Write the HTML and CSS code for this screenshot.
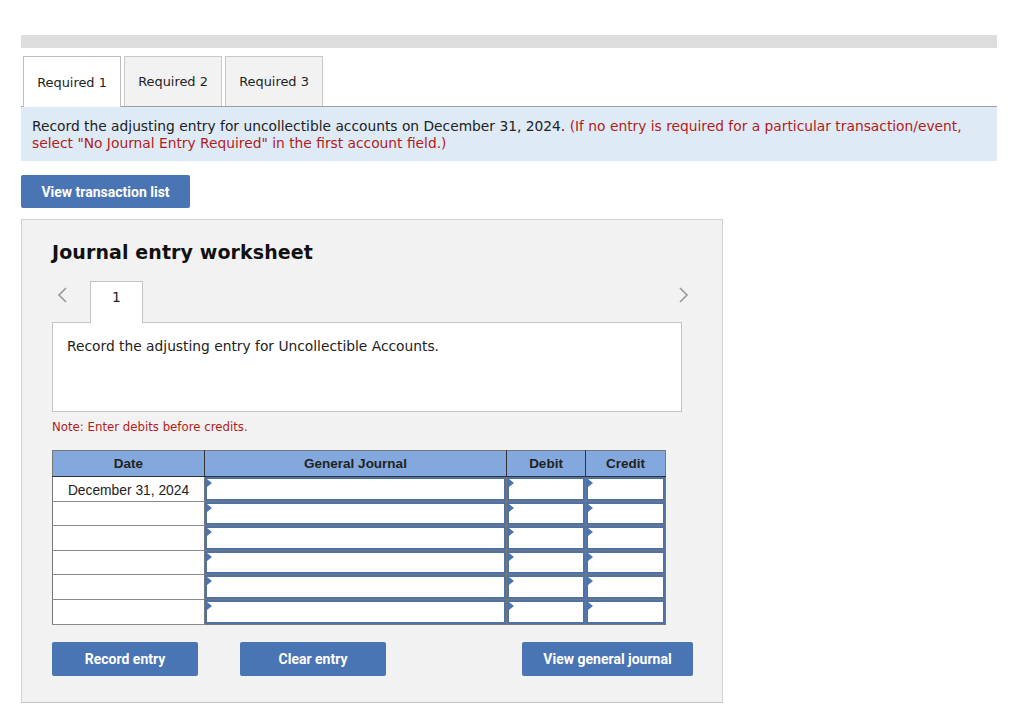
FILE: index.html
```html
<!DOCTYPE html>
<html>
<head>
<meta charset="utf-8">
<link rel="stylesheet" href="styles.css">
</head>
<body>
<div class="page">
  <div class="topbar"></div>
  <div class="tabs">
    <div class="tab active">Required 1</div>
    <div class="tab">Required 2</div>
    <div class="tab">Required 3</div>
  </div>
  <div class="instr">Record the adjusting entry for uncollectible accounts on December 31, 2024. <span class="red">(If no entry is required for a particular transaction/event, select "No Journal Entry Required" in the first account field.)</span></div>
  <button class="btn btn-list">View transaction list</button>
  <div class="panel">
    <h2 class="title">Journal entry worksheet</h2>
    <div class="nav">
      <span class="arrow left"><svg width="12" height="18" viewBox="0 0 12 18"><path d="M10 2 L3 9 L10 16" fill="none" stroke="#999" stroke-width="1.6"/></svg></span>
      <div class="numtab">1</div>
      <span class="arrow right"><svg width="12" height="18" viewBox="0 0 12 18"><path d="M2 2 L9 9 L2 16" fill="none" stroke="#999" stroke-width="1.6"/></svg></span>
    </div>
    <div class="desc">Record the adjusting entry for Uncollectible Accounts.</div>
    <div class="note">Note: Enter debits before credits.</div>
    <table class="journal">
      <colgroup><col class="c1"><col class="c2"><col class="c3"><col class="c4"></colgroup>
      <thead>
        <tr><th>Date</th><th>General Journal</th><th>Debit</th><th>Credit</th></tr>
      </thead>
      <tbody>
        <tr><td class="date">December 31, 2024</td><td class="in"><div class="box"></div></td><td class="in"><div class="box"></div></td><td class="in"><div class="box"></div></td></tr>
        <tr><td class="date"></td><td class="in"><div class="box"></div></td><td class="in"><div class="box"></div></td><td class="in"><div class="box"></div></td></tr>
        <tr><td class="date"></td><td class="in"><div class="box"></div></td><td class="in"><div class="box"></div></td><td class="in"><div class="box"></div></td></tr>
        <tr><td class="date"></td><td class="in"><div class="box"></div></td><td class="in"><div class="box"></div></td><td class="in"><div class="box"></div></td></tr>
        <tr><td class="date"></td><td class="in"><div class="box"></div></td><td class="in"><div class="box"></div></td><td class="in"><div class="box"></div></td></tr>
        <tr><td class="date"></td><td class="in"><div class="box"></div></td><td class="in"><div class="box"></div></td><td class="in"><div class="box"></div></td></tr>
      </tbody>
    </table>
    <div class="actions">
      <button class="btn btn-rec">Record entry</button>
      <button class="btn btn-clear">Clear entry</button>
      <button class="btn btn-view">View general journal</button>
    </div>
  </div>
</div>
</body>
</html>
```
FILE: styles.css
```css
html, body { margin: 0; padding: 0; background: #fff; }
body { font-family: "DejaVu Sans", Verdana, sans-serif; color: #222; }
.page { margin-left: 21px; width: 976px; padding-top: 35px; }
.topbar { height: 13px; background: #dedede; }
.tabs { display: flex; gap: 3px; margin-top: 8px; padding-left: 2px; border-bottom: 1px solid #a0a0a0; height: 50px; }
.tab { width: 96px; height: 49px; border: 1px solid #c9c9c9; border-bottom: none; background: #f2f2f2; font-size: 12.9px; display: flex; align-items: center; justify-content: center; color: #222; }
.tab.active { background: #fff; height: 50px; border-color: #bdbdbd; }
.instr { background: #deeaf6; padding: 11px 11px 9px 11px; font-size: 13.8px; line-height: 17px; color: #222; }
.red { color: #b31b1b; }
.btn { font-family: Roboto, "Liberation Sans", sans-serif; font-weight: 700; font-size: 14px; color: #fff; background: #4a75b5; border: none; border-radius: 2px; padding: 0; cursor: pointer; height: 33px; }
.btn-list { margin-top: 14px; width: 169px; display: block; }
.panel { margin-top: 11px; width: 670px; height: 482px; background: #f2f2f2; border: 1px solid #cfcfcf; border-bottom-color: #c4c4c4; padding: 0 0 0 30px; }
.title { margin: 0; padding-top: 20px; font-size: 19px; font-weight: 700; line-height: 24px; color: #111; letter-spacing: 0.1px; }
.nav { display: flex; align-items: flex-end; height: 42px; margin-top: 16px; position: relative; width: 630px; }
.arrow { display: flex; align-items: center; height: 42px; padding-bottom: 12px; box-sizing: border-box; }
.arrow.left { margin-left: 4px; width: 34px; }
.arrow.right { margin-left: auto; margin-right: -8px; }
.numtab { width: 53px; height: 42px; background: #fff; border: 1px solid #c4c4c4; border-bottom: none; font-size: 13.8px; display: flex; justify-content: center; padding-top: 7px; box-sizing: border-box; margin-bottom: -1px; position: relative; z-index: 1; }
.desc { width: 600px; height: 58px; background: #fff; border: 1px solid #c4c4c4; padding: 15px 14px 15px 14px; font-size: 13.8px; line-height: 16px; }
.note { margin-top: 8px; font-size: 11.75px; color: #b31b1b; line-height: 14px; }
.journal { margin-top: 16px; border-collapse: collapse; width: 613px; font-family: "Liberation Sans", Arial, sans-serif; border: 1px solid #777; table-layout: fixed; }
.c1 { width: 152px; } .c2 { width: 302px; } .c3 { width: 79px; } .c4 { width: 80px; }
.journal th { background: #82a8dd; height: 25px; font-size: 13.5px; font-weight: 700; color: #222; border: 1px solid #333; border-top-color: #777; padding: 0; }
.journal th:first-child { border-left-color: #777; }
.journal th:last-child { border-right-color: #777; }
.journal td { height: 23.6px; padding: 0; background: #fff; border: 1px solid #777; }
.journal td.date { text-align: center; font-size: 13.8px; color: #222; border-bottom-color: #8a8a8a; padding-top: 3px; box-sizing: border-box; }
.journal td.in { border-left: 1px solid #777; }
.box { height: 23.6px; box-sizing: border-box; border: 2px solid #4e72a8; position: relative; background: #fff; }
.box::before { content: ""; position: absolute; left: 0; top: 0; width: 0; height: 0; border-top: 4px solid transparent; border-bottom: 4px solid transparent; border-left: 5px solid #4a75b5; }
.actions { display: flex; margin-top: 17px; width: 641px; }
.btn-rec { width: 146px; height: 34px; }
.btn-clear { width: 146px; height: 34px; margin-left: 42px; }
.btn-view { width: 171px; height: 34px; margin-left: auto; }
```
